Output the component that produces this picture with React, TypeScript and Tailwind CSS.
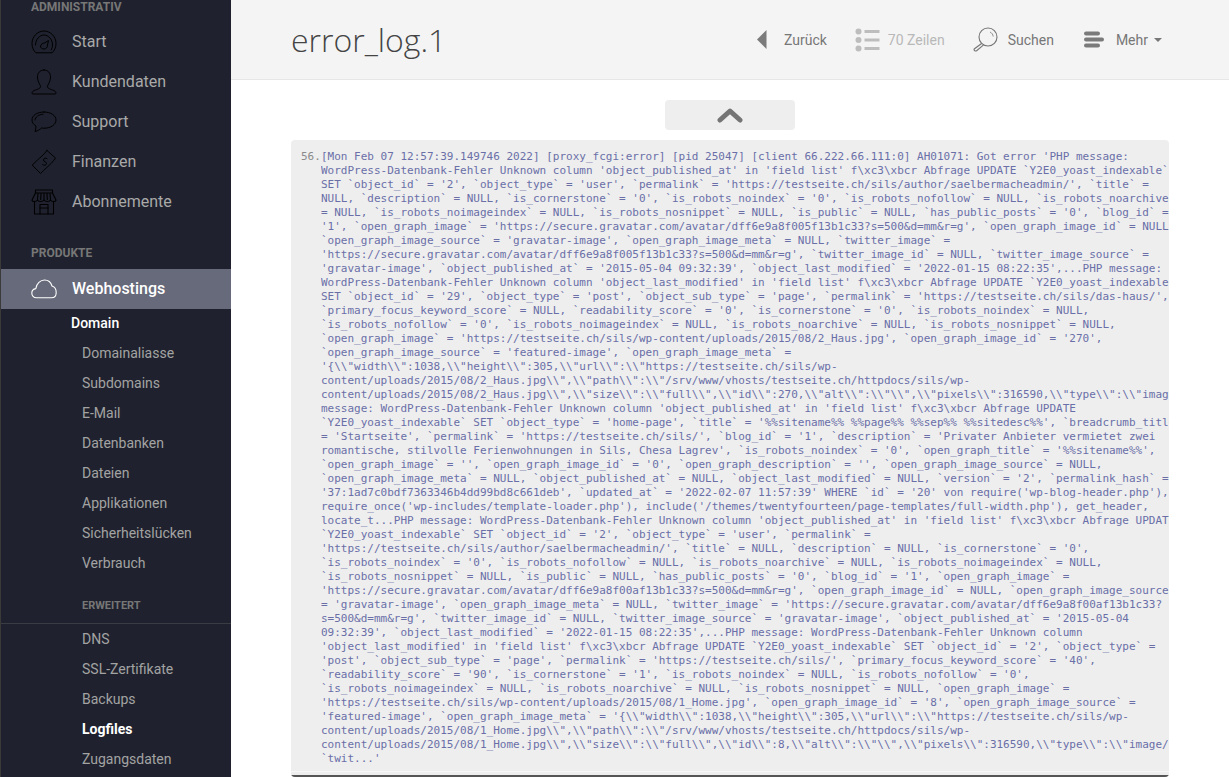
import React from "react";

const LOG = `[Mon Feb 07 12:57:39.149746 2022] [proxy_fcgi:error] [pid 25047] [client 66.222.66.111:0] AH01071: Got error 'PHP message:
WordPress-Datenbank-Fehler Unknown column 'object_published_at' in 'field list' f\\xc3\\xbcr Abfrage UPDATE \`Y2E0_yoast_indexable\`
SET \`object_id\` = '2', \`object_type\` = 'user', \`permalink\` = 'https://testseite.ch/sils/author/saelbermacheadmin/', \`title\` =
NULL, \`description\` = NULL, \`is_cornerstone\` = '0', \`is_robots_noindex\` = '0', \`is_robots_nofollow\` = NULL, \`is_robots_noarchive\`
= NULL, \`is_robots_noimageindex\` = NULL, \`is_robots_nosnippet\` = NULL, \`is_public\` = NULL, \`has_public_posts\` = '0', \`blog_id\` =
'1', \`open_graph_image\` = 'https://secure.gravatar.com/avatar/dff6e9a8f005f13b1c33?s=500&d=mm&r=g', \`open_graph_image_id\` = NULL,
\`open_graph_image_source\` = 'gravatar-image', \`open_graph_image_meta\` = NULL, \`twitter_image\` =
'https://secure.gravatar.com/avatar/dff6e9a8f005f13b1c33?s=500&d=mm&r=g', \`twitter_image_id\` = NULL, \`twitter_image_source\` =
'gravatar-image', \`object_published_at\` = '2015-05-04 09:32:39', \`object_last_modified\` = '2022-01-15 08:22:35',...PHP message:
WordPress-Datenbank-Fehler Unknown column 'object_last_modified' in 'field list' f\\xc3\\xbcr Abfrage UPDATE \`Y2E0_yoast_indexable\`
SET \`object_id\` = '29', \`object_type\` = 'post', \`object_sub_type\` = 'page', \`permalink\` = 'https://testseite.ch/sils/das-haus/',
\`primary_focus_keyword_score\` = NULL, \`readability_score\` = '0', \`is_cornerstone\` = '0', \`is_robots_noindex\` = NULL,
\`is_robots_nofollow\` = '0', \`is_robots_noimageindex\` = NULL, \`is_robots_noarchive\` = NULL, \`is_robots_nosnippet\` = NULL,
\`open_graph_image\` = 'https://testseite.ch/sils/wp-content/uploads/2015/08/2_Haus.jpg', \`open_graph_image_id\` = '270',
\`open_graph_image_source\` = 'featured-image', \`open_graph_image_meta\` =
'{\\\\"width\\\\":1038,\\\\"height\\\\":305,\\\\"url\\\\":\\\\"https://testseite.ch/sils/wp-
content/uploads/2015/08/2_Haus.jpg\\\\",\\\\"path\\\\":\\\\"/srv/www/vhosts/testseite.ch/httpdocs/sils/wp-
content/uploads/2015/08/2_Haus.jpg\\\\",\\\\"size\\\\":\\\\"full\\\\",\\\\"id\\\\":270,\\\\"alt\\\\":\\\\"\\\\",\\\\"pixels\\\\":316590,\\\\"type\\\\":\\\\"image/jpeg\\\\",...PHP
message: WordPress-Datenbank-Fehler Unknown column 'object_published_at' in 'field list' f\\xc3\\xbcr Abfrage UPDATE
\`Y2E0_yoast_indexable\` SET \`object_type\` = 'home-page', \`title\` = '%%sitename%% %%page%% %%sep%% %%sitedesc%%', \`breadcrumb_title\`
= 'Startseite', \`permalink\` = 'https://testseite.ch/sils/', \`blog_id\` = '1', \`description\` = 'Privater Anbieter vermietet zwei
romantische, stilvolle Ferienwohnungen in Sils, Chesa Lagrev', \`is_robots_noindex\` = '0', \`open_graph_title\` = '%%sitename%%',
\`open_graph_image\` = '', \`open_graph_image_id\` = '0', \`open_graph_description\` = '', \`open_graph_image_source\` = NULL,
\`open_graph_image_meta\` = NULL, \`object_published_at\` = NULL, \`object_last_modified\` = NULL, \`version\` = '2', \`permalink_hash\` =
'37:1ad7c0bdf7363346b4dd99bd8c661deb', \`updated_at\` = '2022-02-07 11:57:39' WHERE \`id\` = '20' von require('wp-blog-header.php'),
require_once('wp-includes/template-loader.php'), include('/themes/twentyfourteen/page-templates/full-width.php'), get_header,
locate_t...PHP message: WordPress-Datenbank-Fehler Unknown column 'object_published_at' in 'field list' f\\xc3\\xbcr Abfrage UPDATE
\`Y2E0_yoast_indexable\` SET \`object_id\` = '2', \`object_type\` = 'user', \`permalink\` =
'https://testseite.ch/sils/author/saelbermacheadmin/', \`title\` = NULL, \`description\` = NULL, \`is_cornerstone\` = '0',
\`is_robots_noindex\` = '0', \`is_robots_nofollow\` = NULL, \`is_robots_noarchive\` = NULL, \`is_robots_noimageindex\` = NULL,
\`is_robots_nosnippet\` = NULL, \`is_public\` = NULL, \`has_public_posts\` = '0', \`blog_id\` = '1', \`open_graph_image\` =
'https://secure.gravatar.com/avatar/dff6e9a8f00af13b1c33?s=500&d=mm&r=g', \`open_graph_image_id\` = NULL, \`open_graph_image_source\`
= 'gravatar-image', \`open_graph_image_meta\` = NULL, \`twitter_image\` = 'https://secure.gravatar.com/avatar/dff6e9a8f00af13b1c33?
s=500&d=mm&r=g', \`twitter_image_id\` = NULL, \`twitter_image_source\` = 'gravatar-image', \`object_published_at\` = '2015-05-04
09:32:39', \`object_last_modified\` = '2022-01-15 08:22:35',...PHP message: WordPress-Datenbank-Fehler Unknown column
'object_last_modified' in 'field list' f\\xc3\\xbcr Abfrage UPDATE \`Y2E0_yoast_indexable\` SET \`object_id\` = '2', \`object_type\` =
'post', \`object_sub_type\` = 'page', \`permalink\` = 'https://testseite.ch/sils/', \`primary_focus_keyword_score\` = '40',
\`readability_score\` = '90', \`is_cornerstone\` = '1', \`is_robots_noindex\` = NULL, \`is_robots_nofollow\` = '0',
\`is_robots_noimageindex\` = NULL, \`is_robots_noarchive\` = NULL, \`is_robots_nosnippet\` = NULL, \`open_graph_image\` =
'https://testseite.ch/sils/wp-content/uploads/2015/08/1_Home.jpg', \`open_graph_image_id\` = '8', \`open_graph_image_source\` =
'featured-image', \`open_graph_image_meta\` = '{\\\\"width\\\\":1038,\\\\"height\\\\":305,\\\\"url\\\\":\\\\"https://testseite.ch/sils/wp-
content/uploads/2015/08/1_Home.jpg\\\\",\\\\"path\\\\":\\\\"/srv/www/vhosts/testseite.ch/httpdocs/sils/wp-
content/uploads/2015/08/1_Home.jpg\\\\",\\\\"size\\\\":\\\\"full\\\\",\\\\"id\\\\":8,\\\\"alt\\\\":\\\\"\\\\",\\\\"pixels\\\\":316590,\\\\"type\\\\":\\\\"image/jpeg\\\\",
\`twit...'`;

const stroke = {
  fill: "none",
  stroke: "currentColor",
  strokeWidth: 1,
  strokeLinecap: "round" as const,
  strokeLinejoin: "round" as const,
};

const Gauge = () => (
  <svg width="26" height="24" viewBox="0 0 26 24" {...stroke}>
    <path d="M4.5 22.5 C2.5 20.5 1 17.5 1 13.5 C1 6.5 6.5 1 13 1 C19.5 1 25 6.5 25 13.5 C25 17.5 23.5 20.5 21.5 22.5 Z" />
    <path d="M4.5 15 C4.5 9.5 8.5 5 13 5 C17.5 5 21.5 9.5 21.5 15 C21.5 17 21 18.5 20.2 20" />
    <path d="M9.5 16.5 C9.5 14.5 11.5 13 13.5 13 L17.5 10.5 L16.5 15 C16.5 17.5 15 19 13 19 C11 19 9.5 18 9.5 16.5 Z" />
  </svg>
);
const UserIcon = () => (
  <svg width="26" height="26" viewBox="0 0 26 26" {...stroke}>
    <path d="M13 1 C8.5 1 6.5 4.5 6.5 8 C6.5 12 8.5 15 9.5 17 C10 19 7.5 20 4.5 21 C2 21.8 1 23 1 24 C1 24.7 1.5 25 2 25 L24 25 C24.5 25 25 24.7 25 24 C25 23 24 21.8 21.5 21 C18.5 20 16 19 16.5 17 C17.5 15 19.5 12 19.5 8 C19.5 4.5 17.5 1 13 1 Z" />
  </svg>
);
const Chat = () => (
  <svg width="26" height="22" viewBox="0 0 26 22" {...stroke}>
    <path d="M13 1 C6 1 1 4.5 1 9 C1 11.5 2.5 13.5 5 15 C5 17 4.5 19 4 20.5 C6.5 20 9 18.5 10.5 17 C11.5 17.1 12.2 17.2 13 17.2 C20 17.2 25 13.5 25 9 C25 4.5 20 1 13 1 Z" />
    <path d="M4 9 C4 6 7.5 3.5 12 3.2" />
  </svg>
);
const Money = () => (
  <svg width="26" height="26" viewBox="0 0 26 26" {...stroke}>
    <path d="M16 1.5 L24.5 9 C23 11 22 12.5 20.5 14 C18 16.5 14 20 9.5 24.5 L1.2 16 C5 12.5 8 9.5 11 7 C13 5 14.5 3.5 16 1.5 Z" />
    <path d="M16 9.5 C14.5 8.5 12.5 9.5 12.5 11 C12.5 13 15.5 12.5 15.5 14.5 C15.5 16 13 17 11.5 15.5" />
  </svg>
);
const Store = () => (
  <svg width="26" height="26" viewBox="0 0 26 26" {...stroke} strokeWidth="1.1">
    <path d="M4.5 1 H21.5 V4 H4.5 Z" />
    <path d="M4.5 4 L1 11 C1 13 5.5 13 6.5 11 C7.5 13 11.5 13 13 11 C14.5 13 18.5 13 19.5 11 C20.5 13 25 13 25 11 L21.5 4" />
    <path d="M7 4.5 L6.5 10.5 M10 4.5 L9.7 10.5 M13 4.5 V10.5 M16 4.5 L16.3 10.5 M19 4.5 L19.5 10.5" />
    <path d="M3.5 13 V25 H22.5 V13" />
    <path d="M9 25 V15.5 H17 V25" />
    <path d="M9 19 H17" />
  </svg>
);
const Cloud = () => (
  <svg width="26" height="20" viewBox="0 0 26 20" fill="none" stroke="#ffffff" strokeWidth="1.1" strokeLinejoin="round">
    <path d="M5.5 18.8 C2.5 18.8 0.8 16.5 0.8 14 C0.8 11.5 2.5 10 4.8 9.6 C5.5 4.5 9.5 1 13.5 1 C17.5 1 20 3.5 21 7 C23.5 7.8 25.2 10.5 25.2 13.5 C25.2 16.5 23.5 18.8 20.5 18.8 Z" />
  </svg>
);

const BackIcon = () => (
  <svg width="10" height="19" viewBox="0 0 10 19" fill="#7b7b7b">
    <path d="M9.5 0 V19 L0 9.5 Z" />
  </svg>
);
const ListIcon = () => (
  <svg width="25" height="24" viewBox="0 0 25 24" fill="#bdbdbd">
    <circle cx="3.5" cy="3.5" r="3" />
    <circle cx="3.5" cy="12" r="3" />
    <circle cx="3.5" cy="20.5" r="3" />
    <rect x="9.5" y="2" width="15" height="3" />
    <rect x="9.5" y="10.5" width="15" height="3" />
    <rect x="9.5" y="19" width="15" height="3" />
  </svg>
);
const SearchIcon = () => (
  <svg width="25" height="25" viewBox="0 0 25 25" fill="none" stroke="#757575" strokeWidth="1.1">
    <circle cx="15" cy="10" r="9" />
    <path d="M17 5 C19 6 20 7.5 20.2 9.5" strokeWidth="0.8" />
    <path d="M8.6 16.5 L1.2 22 C0.8 22.6 1.1 23.6 2.2 24 C2.8 24.2 3.2 24 3.6 23.7 L10.6 17.8" />
  </svg>
);
const MoreIcon = () => (
  <svg width="20" height="17" viewBox="0 0 20 17" fill="#7a7a7a">
    <rect x="0" y="0.5" width="16" height="4" rx="2" />
    <rect x="0" y="6.5" width="20" height="4" rx="2" />
    <rect x="0" y="12.5" width="16" height="4" rx="2" />
  </svg>
);

function MainItem({ icon, label }: { icon: React.ReactNode; label: string }) {
  return (
    <div className="flex h-10 items-center">
      <div className="ml-[30px] flex w-[26px] justify-center">{icon}</div>
      <span className="ml-[15px] text-base text-[#a9a9a9]">{label}</span>
    </div>
  );
}

function SubItem({ label, active }: { label: string; active?: boolean }) {
  return (
    <div
      className={
        "flex h-[30px] items-center pl-[81px] text-sm " +
        (active ? "font-bold text-white" : "text-[#a3a3a3]")
      }
    >
      {label}
    </div>
  );
}

export default function App() {
  return (
    <div className="flex h-screen overflow-hidden bg-white font-['Roboto',sans-serif]">
      <aside className="flex w-[231px] shrink-0 flex-col overflow-hidden border-l border-[#3a3a3a] bg-[#1f222e]">
        <div className="mt-[-4px] mb-1 flex h-[22px] items-center pl-[30px] text-xs font-bold text-[#777777]">
          ADMINISTRATIV
        </div>
        <MainItem icon={<Gauge />} label="Start" />
        <MainItem icon={<UserIcon />} label="Kundendaten" />
        <MainItem icon={<Chat />} label="Support" />
        <MainItem icon={<Money />} label="Finanzen" />
        <MainItem icon={<Store />} label="Abonnemente" />
        <div className="mt-5 mb-[5px] flex h-[22px] items-center pl-[30px] text-xs font-bold text-[#777777]">
          PRODUKTE
        </div>
        <div className="flex h-10 items-center bg-[#676a7a]">
          <div className="ml-[30px] flex w-[26px] justify-center">
            <Cloud />
          </div>
          <span className="ml-[15px] text-base font-medium text-white">Webhostings</span>
        </div>
        <div className="mb-px flex h-7 items-center pl-[70px] text-sm font-medium text-white">Domain</div>
        <SubItem label="Domainaliasse" />
        <SubItem label="Subdomains" />
        <SubItem label="E-Mail" />
        <SubItem label="Datenbanken" />
        <SubItem label="Dateien" />
        <SubItem label="Applikationen" />
        <SubItem label="Sicherheitslücken" />
        <SubItem label="Verbrauch" />
        <div className="flex h-[46px] items-end border-b border-[#3a3c44] pb-[9px] pl-[81px] text-[11px] font-bold text-[#777777]">
          ERWEITERT
        </div>
        <SubItem label="DNS" />
        <SubItem label="SSL-Zertifikate" />
        <SubItem label="Backups" />
        <SubItem label="Logfiles" active />
        <SubItem label="Zugangsdaten" />
      </aside>

      <main className="flex min-w-0 flex-1 flex-col">
        <header className="flex h-20 shrink-0 items-center justify-between border-b border-[#e6e6e6] bg-[#f4f4f4] pr-[67px] pl-[60px]">
          <h1 className="font-['Open_Sans',sans-serif] text-[32px] font-light text-[#444444]">error_log.1</h1>
          <div className="flex items-center text-sm text-[#777777]">
            <BackIcon />
            <span className="ml-[17px]">Zurück</span>
            <span className="ml-7">
              <ListIcon />
            </span>
            <span className="ml-2 text-[#b8b8b8]">70 Zeilen</span>
            <span className="ml-7">
              <SearchIcon />
            </span>
            <span className="ml-[10px]">Suchen</span>
            <span className="ml-[30px]">
              <MoreIcon />
            </span>
            <span className="ml-3">Mehr</span>
            <span className="ml-[6px] h-0 w-0 border-x-4 border-t-4 border-x-transparent border-t-[#777777]" />
          </div>
        </header>

        <div className="flex flex-col items-center pt-5 pr-[60px] pl-[60px]">
          <button className="flex h-[30px] w-[130px] items-center justify-center rounded bg-[#eeeeee]">
            <svg width="26" height="16" viewBox="0 0 26 16" fill="none" stroke="#757575" strokeWidth="5" strokeLinecap="round" strokeLinejoin="round">
              <path d="M3 13 L13 4 L23 13" />
            </svg>
          </button>
          <div className="mt-[10px] w-full overflow-hidden rounded bg-[#eeeeee] pt-[10px] text-[11px] leading-[14px]">
            <div className="flex pl-[10px] font-['DejaVu_Sans_Mono',monospace]">
              <span className="w-5 shrink-0 text-[#8a8a8a]">56.</span>
              <pre className="min-w-0 flex-1 overflow-hidden font-['DejaVu_Sans_Mono',monospace] text-[#6a6fa8]">{LOG}</pre>
            </div>
            <div className="mt-[5px] h-px bg-[#f7f7f7]" />
            <div className="mt-[3px] h-[2px] bg-[#555555]" />
          </div>
        </div>
      </main>
    </div>
  );
}
